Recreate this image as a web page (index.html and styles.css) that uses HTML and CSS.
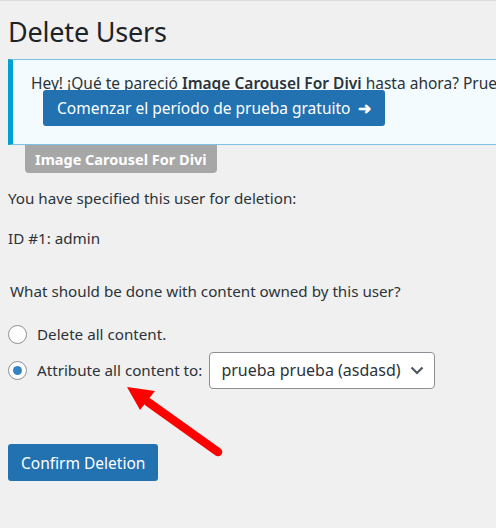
FILE: index.html
```html
<!DOCTYPE html>
<html lang="en">
<head>
<meta charset="utf-8">
<title>Delete Users</title>
<link rel="stylesheet" href="styles.css">
</head>
<body>
<div class="wrap">
  <h1 class="title">Delete Users</h1>
  <div class="notice">
    <p class="notice-text">Hey! ¡Qué te pareció <strong>Image Carousel For Divi</strong> hasta ahora? Prueb</p>
    <a class="btn notice-btn">Comenzar el período de prueba gratuito <span class="arrow">➜</span></a>
  </div>
  <div class="tag">Image Carousel For Divi</div>
  <p class="line line-first">You have specified this user for deletion:</p>
  <p class="line">ID #1: admin</p>
  <fieldset class="options">
    <p class="legend">What should be done with content owned by this user?</p>
    <div class="opt">
      <span class="radio"></span>
      <span class="opt-label">Delete all content.</span>
    </div>
    <div class="opt">
      <span class="radio checked"></span>
      <span class="opt-label">Attribute all content to:</span>
      <span class="select">prueba prueba (asdasd)
        <svg class="chev" width="14" height="9" viewBox="0 0 14 9"><path d="M1.5 1.5 L7 7 L12.5 1.5" fill="none" stroke="#50575e" stroke-width="2.2"/></svg>
      </span>
    </div>
  </fieldset>
  <a class="btn confirm">Confirm Deletion</a>
</div>
<svg class="pointer" width="120" height="80" viewBox="0 0 120 80">
  <line x1="22" y1="17" x2="92" y2="67" stroke="#ff0000" stroke-width="8.5" stroke-linecap="round"/>
  <polygon points="1,2 29,6 14,25" fill="#ff0000"/>
</svg>
</body>
</html>
```
FILE: styles.css
```css
html, body {
  margin: 0;
  padding: 0;
}
body {
  background: #f0f0f1;
  border-top: 1px solid #dcdcde;
  font-family: "Noto Sans", "Open Sans", sans-serif;
  font-size: 16px;
  color: #2c3338;
  overflow: hidden;
  height: 527px;
  position: relative;
}
.wrap {
  padding-left: 8px;
}
.title {
  font-size: 27px;
  font-weight: 400;
  color: #1d2327;
  margin: 0;
  padding-top: 12px;
  line-height: 38px;
  letter-spacing: -0.2px;
}
.notice {
  margin-top: 8px;
  margin-right: -200px;
  background: #f3fbfe;
  border: 1px solid #7ec3e6;
  border-left: 5px solid #00a0d2;
  padding: 13px 0 18px 18px;
}
.notice-text {
  margin: 0;
  line-height: 20px;
  white-space: nowrap;
  font-size: 15.5px;
  color: #2c3338;
}
.notice-text strong {
  font-weight: 600;
}
.btn {
  display: inline-flex;
  align-items: center;
  background: #2271b1;
  color: #fff;
  border-radius: 3px;
  font-size: 15.5px;
  box-sizing: border-box;
  white-space: nowrap;
}
.notice-btn {
  margin-top: -3px;
  margin-left: 12px;
  height: 36px;
  padding: 0 14px;
}
.arrow {
  margin-left: 8px;
  font-size: 16px;
  font-weight: 700;
}
.tag {
  display: inline-block;
  margin-left: 17px;
  background: #a7a7a7;
  color: #fff;
  font-weight: 700;
  font-size: 14.5px;
  line-height: 28px;
  padding: 0 10px;
  border-radius: 0 0 4px 4px;
}
.line {
  margin: 0;
  line-height: 22px;
  font-size: 15.2px;
}
.line-first {
  margin-top: 14px;
  margin-bottom: 18px;
}
.options {
  border: 0;
  margin: 31px 0 0;
  padding: 0;
}
.legend {
  margin: 0 0 14px 2px;
  font-size: 15.2px;
  line-height: 22px;
}
.opt {
  display: flex;
  align-items: center;
  gap: 10px;
  height: 36px;
}
.radio {
  width: 19px;
  height: 19px;
  border: 1px solid #8c8f94;
  border-radius: 50%;
  background: #fff;
  box-sizing: border-box;
  display: flex;
  align-items: center;
  justify-content: center;
  flex: none;
}
.radio.checked::after {
  content: "";
  width: 9px;
  height: 9px;
  border-radius: 50%;
  background: #3582c4;
}
.opt-label {
  font-size: 15.2px;
  line-height: 22px;
}
.select {
  display: inline-flex;
  align-items: center;
  justify-content: space-between;
  margin-left: -3px;
  width: 226px;
  height: 37px;
  flex: none;
  white-space: nowrap;
  box-sizing: border-box;
  border: 1px solid #8c8f94;
  border-radius: 4px;
  background: #fff;
  padding: 0 10px 0 11px;
  font-size: 16px;
  color: #2c3338;
}
.confirm {
  margin-top: 56px;
  height: 37px;
  padding: 0 13px;
}
.pointer {
  position: absolute;
  left: 126px;
  top: 384px;
}
```
